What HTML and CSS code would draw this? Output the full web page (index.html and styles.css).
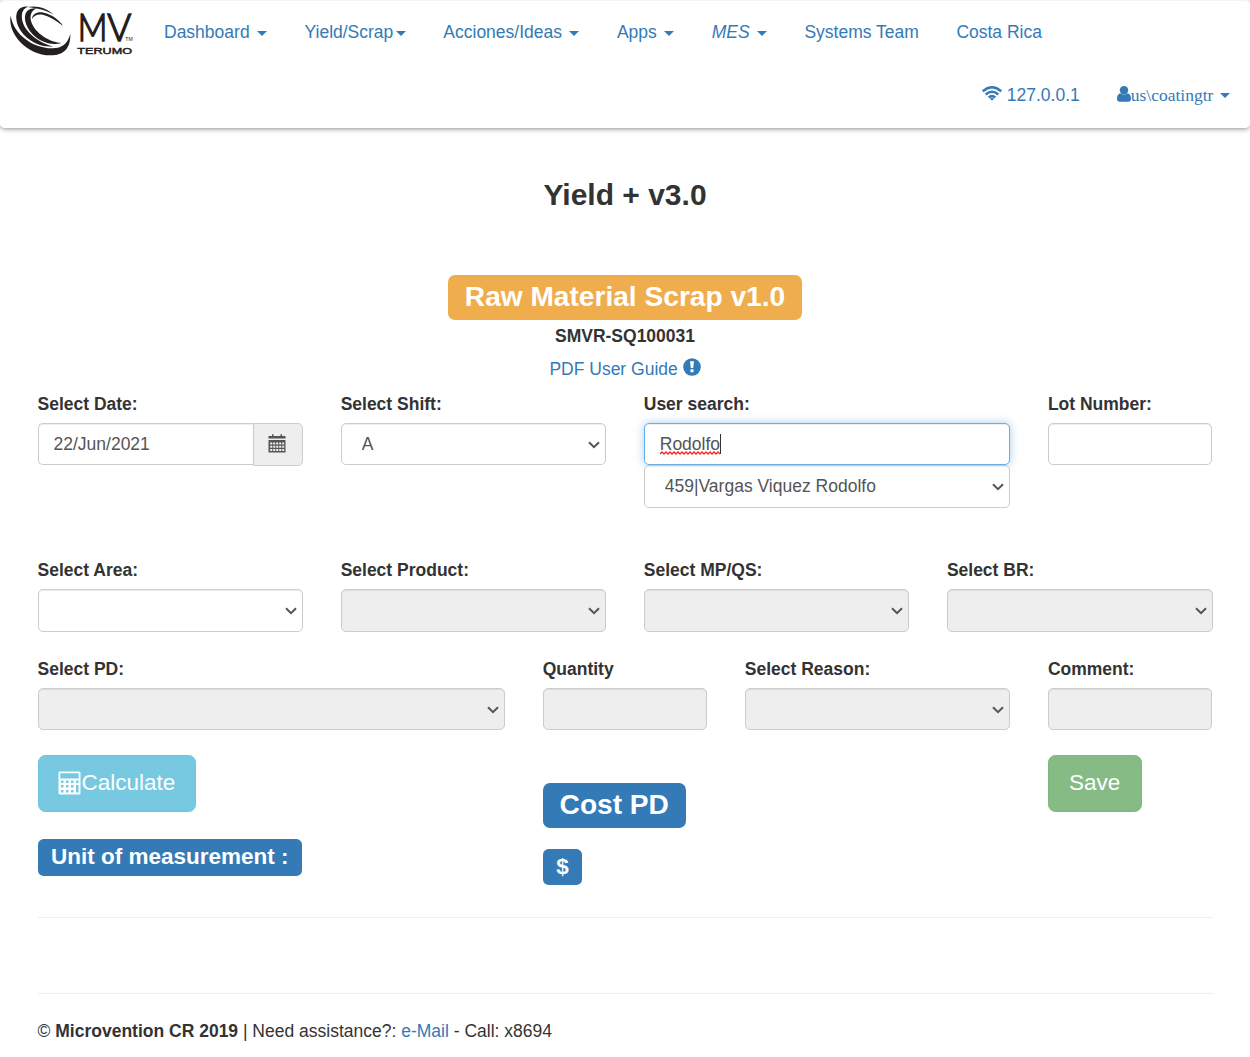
FILE: index.html
```html
<!DOCTYPE html>
<html lang="en">
<head>
<meta charset="utf-8">
<title>Yield + v3.0</title>
<link rel="stylesheet" href="styles.css">
</head>
<body>
<svg width="0" height="0" class="defs">
  <symbol id="chevron" viewBox="0 0 12 8"><path d="M1 1.2 6 6.2 11 1.2" fill="none" stroke="currentColor" stroke-width="2"/></symbol>
</svg>
<nav class="navbar">
  <div class="nav-row">
    <a class="brand" href="#">
      <svg width="135" height="62" viewBox="3 3 405 186">
        <g fill="#231f20">
          <path d="M32 47C22 100 80 166 152 166 190 166 212 147 211 102 203 131 185 146 155 145 98 143 42 105 32 47Z"/>
          <path d="M84 20C58 18 47 34 49 57 53 102 107 145 160 139 127 134 71 98 66 57 64 35 70 26 84 20Z"/>
          <path d="M112 25C86 22 73 35 75 58 79 101 135 144 185 129 144 127 98 94 92 58 90 40 98 29 112 25Z"/>
          <path d="M82 21C112 15 143 26 162 45 139 30 111 24 82 21Z"/>
          <path d="M96 57C97 41 113 34 131 38 155 43 179 60 189 78 169 62 149 49 129 44 113 41 101 46 96 57Z"/>
        </g>
        <text class="logo-mv" x="233" y="122" textLength="89" lengthAdjust="spacingAndGlyphs">M</text>
        <text class="logo-mv" x="322" y="122" textLength="72" lengthAdjust="spacingAndGlyphs">V</text>
        <text class="logo-tm" x="376" y="122" textLength="22" lengthAdjust="spacingAndGlyphs">TM</text>
        <text class="logo-sub" x="232" y="161" textLength="164" lengthAdjust="spacingAndGlyphs">TERUMO</text>
      </svg>
    </a>
    <a href="#">Dashboard <b class="caret"></b></a>
    <a href="#">Yield/Scrap<b class="caret"></b></a>
    <a href="#">Acciones/Ideas <b class="caret"></b></a>
    <a href="#">Apps <b class="caret"></b></a>
    <a href="#"><i>MES</i> <b class="caret"></b></a>
    <a href="#">Systems Team</a>
    <a href="#">Costa Rica</a>
  </div>
  <div class="nav-row nav-right">
    <a href="#" class="ip"><svg class="wifi" width="20" height="15" viewBox="0 0 20 15"><g fill="none" stroke="currentColor" stroke-width="2.5"><path d="M.8 5.300Q10-2.700 19.200 5.300M3.700 8.500Q10 3.100 16.300 8.500M6.700 11.500Q10 8.800 13.300 11.500"/></g><path d="M8 12.700Q10 11.200 12 12.700L10 14.700Z" fill="currentColor"/></svg> 127.0.0.1</a>
    <a href="#" class="user"><svg width="14" height="16" viewBox="0 0 14 16" fill="currentColor"><path d="M3.2 7.2C1 7.600 0 10 0 12.800 0 14.700 1 15.800 2.700 15.800H11.300C13 15.800 14 14.700 14 12.800 14 10 13 7.600 10.800 7.200 9 8.900 5 8.900 3.200 7.200Z"/><circle cx="7" cy="4.200" r="4.200"/></svg>us\coatingtr <b class="caret"></b></a>
  </div>
</nav>

<main class="page">
  <header class="heading">
    <h1>Yield + v3.0</h1>
    <span class="label label-lg label-warning">Raw Material Scrap v1.0</span>
    <strong>SMVR-SQ100031</strong>
    <a href="#">PDF User Guide <svg class="info" width="18" height="18" viewBox="0 0 18 18"><circle cx="9" cy="9" r="8.800" fill="currentColor"/><path d="M7 3.200H11L10.200 10H7.800ZM7.500 11.300H10.500V14.300H7.500Z" fill="#fff"/></svg></a>
  </header>

  <form>
    <div class="row row-first">
      <div class="col-3">
        <label>Select Date:</label>
        <div class="input-group">
          <input class="control" value="22/Jun/2021">
          <span class="addon"><svg width="18" height="19" viewBox="0 0 18 19"><path d="M.5 2H4V.3H5.500V2H12.500V.3H14V2H17.500V4.500H.5ZM.5 6H17.500V18.500H.5Z" fill="#555"/><path d="M2.200 9.600h14M2.200 12.800h14M2.200 16h14" stroke="#eee" stroke-width="2" stroke-dasharray="2.100 .9"/></svg></span>
        </div>
      </div>
      <div class="col-3">
        <label>Select Shift:</label>
        <div class="select"><select class="control"><option>A</option></select><svg><use href="#chevron"/></svg></div>
      </div>
      <div class="col-4">
        <label>User search:</label>
        <div class="control focused" role="textbox"><span class="typed">Rodolfo<svg width="61" height="4" viewBox="0 0 61 4"><path d="M0 3 2 1 4 3 6 1 8 3 10 1 12 3 14 1 16 3 18 1 20 3 22 1 24 3 26 1 28 3 30 1 32 3 34 1 36 3 38 1 40 3 42 1 44 3 46 1 48 3 50 1 52 3 54 1 56 3 58 1 60 3" fill="none" stroke="#f22" stroke-width="1.3"/></svg></span></div>
        <div class="select"><select class="control results"><option>459|Vargas Viquez Rodolfo</option></select><svg><use href="#chevron"/></svg></div>
      </div>
      <div class="col-2">
        <label>Lot Number:</label>
        <input class="control">
      </div>
    </div>

    <div class="row row-second">
      <div class="col-3"><label>Select Area:</label><div class="select"><select class="control"></select><svg><use href="#chevron"/></svg></div></div>
      <div class="col-3"><label>Select Product:</label><div class="select"><select class="control" disabled></select><svg><use href="#chevron"/></svg></div></div>
      <div class="col-3"><label>Select MP/QS:</label><div class="select"><select class="control" disabled></select><svg><use href="#chevron"/></svg></div></div>
      <div class="col-3"><label>Select BR:</label><div class="select"><select class="control" disabled></select><svg><use href="#chevron"/></svg></div></div>
    </div>

    <div class="row row-third">
      <div class="col-5"><label>Select PD:</label><div class="select"><select class="control" disabled></select><svg><use href="#chevron"/></svg></div></div>
      <div class="col-2"><label>Quantity</label><input class="control" disabled></div>
      <div class="col-3"><label>Select Reason:</label><div class="select"><select class="control" disabled></select><svg><use href="#chevron"/></svg></div></div>
      <div class="col-2"><label>Comment:</label><input class="control" disabled></div>
    </div>

    <div class="row row-actions">
      <div class="col-5 stack">
        <button type="button" class="btn btn-info"><svg width="23" height="24" viewBox="0 0 23 24"><path fill="#fff" fill-rule="evenodd" d="M2 .5H21Q22.5.5 22.5 2V22Q22.5 23.500 21 23.500H2Q.5 23.500 .5 22V2Q.5.5 2 .5ZM2.300 2.300V7.500H20.700V2.300ZM3 9.500V12H5.500V9.500ZM8 9.500V12H10.500V9.500ZM13 9.500V12H15.500V9.500ZM18 9.500V12H20.500V9.500ZM3 14V16.500H5.500V14ZM8 14V16.500H10.500V14ZM13 14V16.500H15.500V14ZM18 14V21.500H20.500V14ZM3 19V21.500H5.500V19ZM8 19V21.500H10.500V19ZM13 19V21.500H15.500V19Z"/></svg>Calculate</button>
        <span class="label label-md">Unit of measurement :</span>
      </div>
      <div class="col-5 stack cost">
        <span class="label label-lg">Cost PD</span>
        <span class="label label-md dollar">$</span>
      </div>
      <div class="col-2 stack"><button type="button" class="btn btn-success">Save</button></div>
    </div>
  </form>
  <hr>
  <footer>© <b>Microvention CR 2019</b> | Need assistance?: <a href="#">e-Mail</a> - Call: x8694</footer>
</main>
</body>
</html>
```
FILE: styles.css
```css
* { box-sizing: border-box; }

body {
  margin: 0;
  background: #fff;
  color: #333;
  font: 17.5px/25px "Liberation Sans", Arial, sans-serif;
}

a { color: #337ab7; text-decoration: none; }
.defs { display: block; }

/* Navigation */
.navbar {
  height: 128px;
  border: 1px solid #fff;
  border-top-color: #f4f4f4;
  border-radius: 5px;
  box-shadow: 0 1px 5px rgba(0, 0, 0, .45);
}
.nav-row { display: flex; height: 62.5px; }
.nav-row > a { padding: 18.75px; white-space: nowrap; }
.nav-row > .brand { width: 144.25px; padding: 0; flex: none; }
.brand svg { display: block; overflow: visible; }
.nav-right { justify-content: flex-end; }
.nav-row > .ip { padding-top: 19.5px; }
.user { font-family: "Liberation Serif", "Times New Roman", serif; }
.nav-row > .user { padding-top: 19.5px; }
.user svg { margin-right: -.5px; vertical-align: -1px; }
.user .caret { margin-bottom: 2px; }
.wifi { vertical-align: 0; }
.caret {
  display: inline-block;
  margin-left: 2.5px;
  border: 5px solid transparent;
  border-top-color: currentColor;
  border-bottom: 0;
  vertical-align: middle;
}
.logo-mv { font: 300 113px Lato, sans-serif; fill: #231f20; stroke: #231f20; stroke-width: 4.5; }
.logo-tm { font: 14px "Liberation Sans", sans-serif; fill: #231f20; }
.logo-sub { font: 28px "Liberation Sans", sans-serif; fill: #231f20; stroke: #231f20; stroke-width: 1.5; }

/* Heading */
.page { padding: 0 37.5px; }
.heading { display: flex; flex-direction: column; align-items: center; padding-top: 50px; }
h1 { margin: 0 0 64px; font-size: 30px; line-height: 33px; }
.heading strong { margin-top: 3.5px; }
.heading > a { margin-top: 8px; }
.info { vertical-align: -1px; }

.label {
  display: block;
  width: max-content;
  border-radius: .25em;
  background: #337ab7;
  color: #fff;
  font-weight: bold;
  padding: 0 .6em;
}
.label-lg { height: 45px; font-size: 28.125px; line-height: 44px; }
.label-md { height: 37px; font-size: 22.5px; line-height: 36px; }
.label-warning { background: #f0ad4e; }

/* Form grid */
.row { display: grid; grid-template-columns: repeat(12, 1fr); margin: 0 -18.75px; }
.row > div { padding: 0 18.75px; min-width: 0; }
.col-2 { grid-column: span 2; }
.col-3 { grid-column: span 3; }
.col-4 { grid-column: span 4; }
.col-5 { grid-column: span 5; }
.row-first { padding-top: 10.5px; height: 176.5px; }
.row-second { height: 99px; }
.row-third { height: 98px; }
label { display: block; margin-bottom: 6.25px; font-weight: bold; }

.control {
  display: block;
  width: 100%;
  height: 42.5px;
  padding: 7.5px 15px;
  border: 1px solid #ccc;
  border-radius: 5px;
  background: #fff;
  box-shadow: inset 0 1px 1px rgba(0, 0, 0, .075);
  color: #555;
  font: inherit;
  appearance: none;
}
.row-first .control, .row-third .control { height: 42px; }
.row-first .results { height: 42.75px; }
.control:disabled { background: #eee; opacity: 1; }
select.control { padding-left: 20px; }
.select { position: relative; }
.select svg { position: absolute; right: 6px; top: 18px; width: 12px; height: 8px; color: #555; }
.row-first .select svg { top: 17.25px; }
.focused { border-color: #66afe9; box-shadow: inset 0 1px 1px rgba(0, 0, 0, .075), 0 0 10px rgba(102, 175, 233, .6); }
.typed {
  position: relative;
  display: block;
  width: max-content;
  height: 20px;
  margin-top: 2.5px;
  line-height: 20px;
  border-right: 1px solid #333;
}
.typed svg { position: absolute; left: 0; top: 17px; }
.input-group { display: flex; }
.input-group .control { flex: 1; min-width: 0; border-right: 0; border-radius: 5px 0 0 5px; }
.addon {
  display: grid;
  place-items: center;
  width: 50px;
  height: 43px;
  border: 1px solid #ccc;
  border-radius: 0 5px 5px 0;
  background: #eee;
}
.addon svg { margin: -2px 2px 0 0; }

/* Actions */
.row-actions { height: 162px; }
.stack { display: flex; flex-direction: column; align-items: flex-start; }
.btn {
  display: flex;
  align-items: center;
  height: 57px;
  padding: 0 20px 2px;
  border: 1px solid;
  border-radius: 7.5px;
  color: #fff;
  font: 22.5px/30px "Liberation Sans", Arial, sans-serif;
}
.btn svg { margin-right: 1px; }
.btn-info { margin-bottom: 27px; padding-left: 19px; background: #77c9e2; border-color: #6bc5df; }
.btn-success { width: 94px; background: #86bb86; border-color: #7db97d; }
.cost { padding-top: 28px !important; }
.dollar { margin-top: 21px; height: 36px; }

hr { margin: 0; border: 0; border-top: 1px solid #eee; }
footer { margin-top: 75px; padding-top: 25px; border-top: 1px solid #eee; }
```
